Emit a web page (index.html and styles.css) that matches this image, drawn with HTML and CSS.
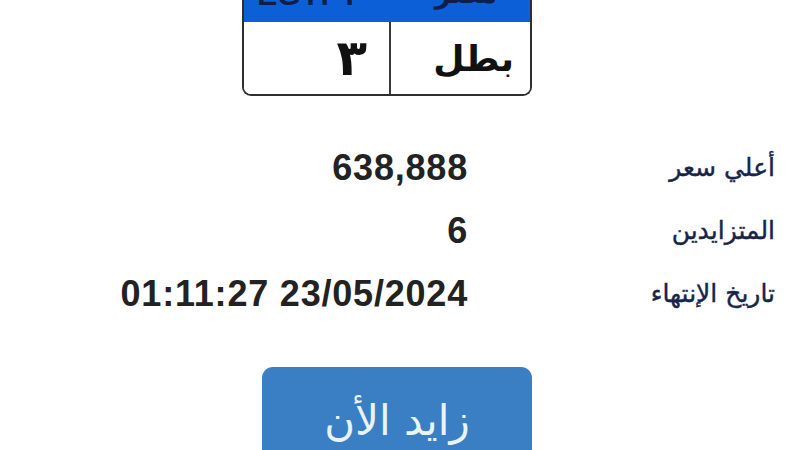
FILE: index.html
```html
<!DOCTYPE html>
<html lang="ar">
<head>
<meta charset="utf-8">
<link rel="stylesheet" href="styles.css">
</head>
<body>
<div class="page">
  <div class="plate">
    <div class="plate-head">
      <div class="head-cell head-en">EGYPT</div>
      <div class="head-cell head-ar">مصر</div>
    </div>
    <div class="plate-body">
      <div class="cell cell-num">٣</div>
      <div class="cell cell-letters">بطل</div>
    </div>
  </div>

  <div class="info">
    <div class="label">أعلي سعر</div>
    <div class="value">638,888</div>
    <div class="label">المتزايدين</div>
    <div class="value">6</div>
    <div class="label">تاريخ الإنتهاء</div>
    <div class="value">01:11:27 23/05/2024</div>
  </div>

  <div class="actions">
    <button class="bid">زايد الأن</button>
  </div>
</div>
</body>
</html>
```
FILE: styles.css
```css
html, body {
  margin: 0;
  padding: 0;
  background: #ffffff;
  width: 800px;
  height: 450px;
  overflow: hidden;
}
.page {
  width: 800px;
  display: flex;
  flex-direction: column;
  margin-top: -20px;
}
.plate {
  margin-left: 242px;
  width: 290px;
  box-sizing: border-box;
  border: 2px solid #2e2e2e;
  border-top: none;
  border-radius: 0 0 9px 9px;
  overflow: hidden;
}
.plate-head {
  display: flex;
  height: 42px;
  background: #0c5fd7;
}
.head-cell {
  flex: 1;
  display: flex;
  justify-content: center;
  align-items: flex-start;
  color: #0d1f4a;
  font-weight: bold;
  line-height: 1;
}
.head-en {
  font-family: "Liberation Sans", Arial, sans-serif;
  font-size: 30px;
}
.head-ar {
  font-family: "DejaVu Sans", sans-serif;
  font-size: 28px;
  margin-top: 0;
  padding-left: 30px;
}
.plate-body {
  display: flex;
  height: 72px;
  background: #fff;
}
.cell {
  flex: 1;
  display: flex;
  align-items: center;
  justify-content: flex-end;
  color: #111;
}
.cell-num {
  border-right: 2px solid #3a3a3a;
  font-family: "DejaVu Sans", sans-serif;
  font-weight: bold;
  font-size: 50px;
  padding-right: 22px;
}
.cell-letters {
  font-family: "DejaVu Sans", sans-serif;
  font-weight: bold;
  font-size: 36px;
  padding-right: 16px;
}
.info {
  direction: rtl;
  display: grid;
  grid-template-columns: 308px 1fr;
  grid-auto-rows: 63px;
  margin-top: 40px;
  margin-right: 25px;
  align-items: center;
}
.label {
  font-family: "DejaVu Sans", sans-serif;
  font-size: 25px;
  color: #16244a;
  text-align: right;
  -webkit-text-stroke: 0.4px #16244a;
}
.value {
  direction: ltr;
  text-align: right;
  font-family: "Liberation Sans", Arial, sans-serif;
  font-weight: bold;
  font-size: 36px;
  letter-spacing: 0.8px;
  margin-right: -1px;
  color: #222222;
}
.actions {
  margin-top: 42px;
  padding-left: 262px;
}
.bid {
  width: 270px;
  height: 118px;
  border: none;
  border-radius: 11px;
  background: #3a7fc4;
  color: #eaf2fa;
  font-family: "DejaVu Sans", sans-serif;
  font-size: 42px;
  padding: 0 0 12px 0;
  direction: rtl;
}
```
